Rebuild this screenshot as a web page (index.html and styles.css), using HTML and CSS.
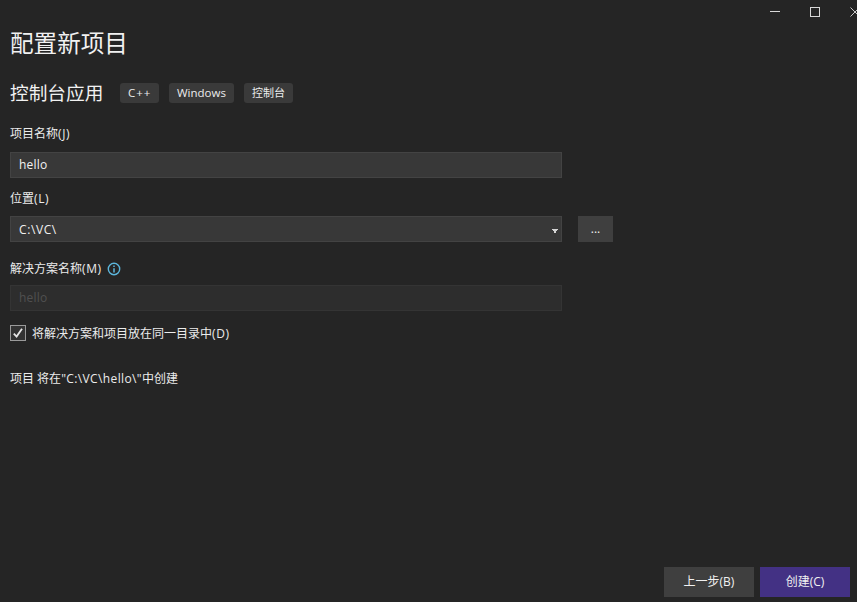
FILE: index.html
```html
<!DOCTYPE html>
<html lang="zh-CN">
<head>
<meta charset="utf-8">
<title>配置新项目</title>
<link rel="stylesheet" href="styles.css">
</head>
<body>
<div class="window">
  <div class="titlebar">
    <svg class="ctl ctl-min" width="40" height="24" viewBox="0 0 40 24"><path d="M0 11.5H10" stroke="#d8d8d8" fill="none"/></svg>
    <svg class="ctl" width="40" height="24" viewBox="0 0 40 24"><rect x="0.5" y="7.5" width="9" height="9" stroke="#d8d8d8" fill="none"/></svg>
    <svg class="ctl" width="7" height="24" viewBox="0 0 7 24"><path d="M0.5 7.5L9.5 16.5M9.5 7.5L0.5 16.5" stroke="#c8c8c8" fill="none"/></svg>
  </div>
  <main class="content">
    <h1 class="title">配置新项目</h1>
    <div class="subhead">
      <h2 class="subtitle">控制台应用</h2>
      <span class="tag tag-cpp">C++</span>
      <span class="tag">Windows</span>
      <span class="tag tag-cjk">控制台</span>
    </div>
    <div class="label first"><span>项目名称<span class="latin">(J)</span></span></div>
    <div class="field wide">hello</div>
    <div class="label loc"><span>位置<span class="latin">(L)</span></span></div>
    <div class="row">
      <div class="field wide combo"><span class="path">C:\VC\</span><svg class="caret" width="6" height="4" viewBox="0 0 6 4"><path d="M0 0H6V1H5V2H4V4H2V2H1V1H0Z" fill="#d4d4d4"/></svg></div>
      <button class="browse">...</button>
    </div>
    <div class="label sol"><span>解决方案名称<span class="latin">(M)</span></span>
      <svg class="info" width="14" height="14" viewBox="0 0 14 14"><circle cx="7" cy="7" r="5.7" fill="none" stroke="#5cb6dc" stroke-width="1.4"/><path d="M7 6.2V10.4" stroke="#5cb6dc" stroke-width="1.5"/><path d="M7 3.6V5" stroke="#5cb6dc" stroke-width="1.5"/></svg>
    </div>
    <div class="field wide disabled">hello</div>
    <div class="check">
      <span class="box"><svg width="14" height="14" viewBox="0 0 14 14"><path d="M2.8 7.6L5.6 10.6L11 2.8" fill="none" stroke="#e6e6e6" stroke-width="1.8"/></svg></span>
      <span class="check-text">将解决方案和项目放在同一目录中<span class="latin">(D)</span></span>
    </div>
    <p class="note">项目 将在<span class="note-path">"C:\VC\hello\"</span>中创建</p>
  </main>
  <footer class="footer">
    <button class="btn">上一步(B)</button>
    <button class="btn primary">创建(C)</button>
  </footer>
</div>
</body>
</html>
```
FILE: styles.css
```css
* { box-sizing: border-box; }
html, body { margin: 0; height: 100%; }
body {
  background: #252525;
  color: #f1f1f1;
  font-family: "Open Sans", "Noto Sans CJK SC", sans-serif;
  font-size: 12px;
  overflow: hidden;
}
.window {
  width: 857px;
  height: 602px;
  display: flex;
  flex-direction: column;
  overflow: hidden;
}
.titlebar {
  height: 24px;
  display: flex;
  justify-content: flex-end;
  flex: none;
}
.ctl { display: block; flex: none; }
.content {
  flex: 1;
  padding: 0 10px;
}
.title {
  margin: 0;
  height: 38px;
  line-height: 38px;
  font-size: 23.6px;
  font-weight: 400;
}
.subhead {
  margin-top: 21px;
  display: flex;
  align-items: center;
  height: 20px;
}
.subtitle {
  margin: 0 7px 0 0;
  width: 103px;
  font-size: 18.7px;
  font-weight: 400;
  line-height: 18px;
  white-space: nowrap;
}
.tag {
  height: 20px;
  line-height: 20px;
  padding: 0 8px;
  margin-right: 10px;
  background: #3a3a3a;
  border-radius: 3px;
  font-size: 11.5px;
  color: #ececec;
}
.tag-cpp { width: 39px; letter-spacing: 1px; white-space: nowrap; }
.tag-cjk { width: 49px; font-size: 11px; white-space: nowrap; }
.label {
  line-height: 18px;
  height: 18px;
  padding-top: 2px;
  color: #ececec;
  display: flex;
  align-items: center;
  gap: 5px;
}
.latin { letter-spacing: 0.6px; }
.first { margin-top: 21px; }
.loc { margin-top: 11px; }
.sol { margin-top: 17px; }
.field {
  height: 26px;
  background: #383838;
  border: 1px solid #434343;
  line-height: 24px;
  padding-left: 8px;
  font-size: 12px;
  letter-spacing: 0.2px;
  color: #f1f1f1;
}
.wide { width: 552px; }
.first + .field { margin-top: 10px; }
.loc + .row { margin-top: 9px; }
.sol + .field { margin-top: 8px; }
.row {
  display: flex;
  gap: 16px;
}
.combo {
  display: flex;
  align-items: center;
  justify-content: space-between;
  padding-right: 3px;
}
.path { padding-top: 1px; letter-spacing: 0.6px; }
.caret { margin-top: 3px; }
.browse {
  width: 35px;
  height: 26px;
  padding: 0 0 2px;
  background: #3f3f3f;
  border: 0;
  color: #f1f1f1;
  font: 12px "Open Sans", sans-serif;
}
.disabled {
  background: #2d2d2d;
  border-color: #343434;
  color: #505050;
}
.check {
  margin-top: 14px;
  height: 16px;
  line-height: 16px;
  display: flex;
  align-items: center;
  gap: 6px;
  color: #ececec;
}
.check-text { padding-top: 2px; }
.box {
  width: 16px;
  height: 16px;
  flex: none;
  border: 1px solid #9a9a9a;
  background: #333;
  display: flex;
  align-items: center;
  justify-content: center;
}
.note {
  margin: 29px 0 0;
  line-height: 18px;
  color: #ececec;
}
.note-path { letter-spacing: 0.38px; }
.footer {
  flex: none;
  display: flex;
  justify-content: flex-end;
  gap: 6px;
  padding: 0 7px 5px 0;
}
.btn {
  width: 90px;
  height: 30px;
  border: 0;
  background: #3f3f3f;
  color: #f1f1f1;
  font: 12px "Open Sans", "Noto Sans CJK SC", sans-serif;
  padding: 0 0 2px;
}
.primary { background: #433184; }
```
